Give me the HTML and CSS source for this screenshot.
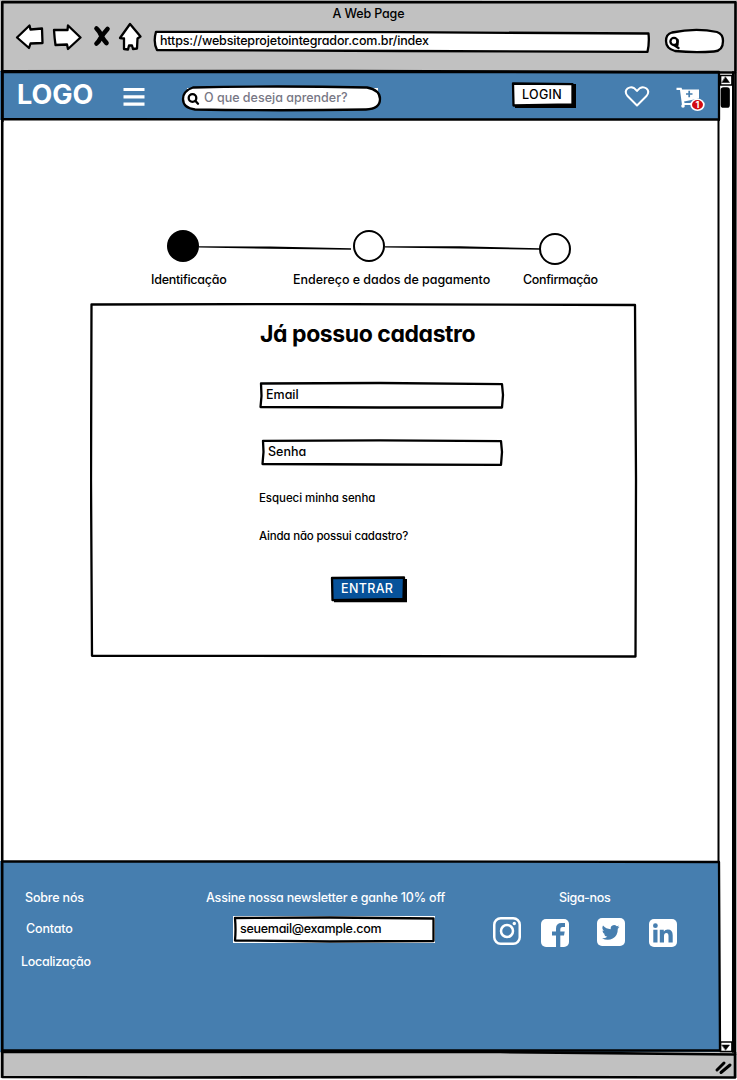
FILE: index.html
```html
<!DOCTYPE html>
<html lang="pt-BR">
<head>
<meta charset="utf-8">
<title>A Web Page</title>
<link rel="stylesheet" href="styles.css">
</head>
<body>
<div class="window">
  <header class="chrome">
    <div class="chrome-title"><span class="t-title">A Web Page</span></div>
    <div class="toolbar">
      <svg class="ic-back" viewBox="15 23 30 28" width="30" height="28"><path d="M17 37.500L29.500 25.500L30.500 29.500L42 28.500L42.500 43L30.500 43.500L29 48Z"/></svg>
      <svg class="ic-forward" viewBox="52 23 30 28" width="30" height="28"><path d="M54 30L67.500 30L68 25.500L80.500 37.500L68 49L67 44.500L55.500 45Q54.500 38 54 30Z"/></svg>
      <svg class="ic-stop" viewBox="92 23 20 28" width="20" height="28"><path d="M96.500 28.500Q99.500 31 102 37Q104.500 41 106.500 43M107.500 29Q103 34 101 37.500Q98.500 42 96.500 43.500"/></svg>
      <svg class="ic-home" viewBox="118 22 25 30" width="25" height="30"><path d="M130 24L140.500 36.500L137.500 38.500L137 48.500L133 49L132 45.500L129 45.500L128 49.500L124 49L124 38.500L120 38Z"/></svg>
      <div class="url"><svg class="sketch" viewBox="153 30 498 24" width="498" height="24"><path d="M156 31.800L400 32.200L648.500 33.500Q649.500 43 647.500 51.800L400 51L157 50Q153 42 156 31.800Z"/></svg><span class="t-url">https://websiteprojetointegrador.com.br/index</span></div>
      <svg class="ic-search" viewBox="664 27 62 28" width="62" height="28"><path d="M672 32.500Q696 27.500 717 32Q723 34 723 41Q723 51 714 51.500Q694 53 675 51Q666 48.500 666 41Q666 34 672 32.500Z"/><circle cx="674" cy="41.500" r="3.600"/><path d="M674 45L678.500 48M677.500 40V45"/></svg>
    </div>
  </header>

  <div class="viewport">
    <div class="page">
      <nav class="nav">
        <strong class="logo">LOGO</strong>
        <svg class="menu" viewBox="0 0 22 18" width="22" height="18"><path d="M.5 1.500H21.500M.5 8.800H21.500M.5 16.200H21.500"/></svg>
        <div class="search">
          <svg class="sketch" viewBox="181 85 202 27" width="202" height="27"><path class="pill-bg" d="M187 88H378V96H187Z"/><path d="M193 87.500Q275 85.500 367 87.500Q380 90 380 99Q380 109 366 109.500Q280 111 195 109.500Q183 108 183 99Q183 91 193 87.500Z"/><circle cx="192.500" cy="98" r="3.800"/><path d="M195.500 101L198 103.700"/></svg>
          <span class="t-search">O que deseja aprender?</span>
        </div>
        <button class="login"><svg class="sketch" viewBox="511 81 66 28" width="66" height="28"><path class="shadow" d="M515 84H576V108H515Z"/><path d="M513 83.500L572.500 84.200L572.500 104.500L513.500 105.500Z"/></svg><span class="t-login">LOGIN</span></button>
        <svg class="heart" viewBox="624 85 26 23" width="26" height="23"><path d="M637 105.500L627.500 96Q624 91.500 627.500 88.500Q632.500 85 637 91Q641.500 85 646.500 88.500Q650 91.500 646.500 96Z"/></svg>
        <svg class="cart" viewBox="676 86 30 26" width="30" height="26"><path class="cart-body" d="M676.500 87.800H681.500L682.200 89.500H699V98.500L684 101.500L684.600 103H694V105H682L680 89.900H676.500Z"/><circle class="cart-body" cx="683" cy="106" r="1.800"/><path class="cart-plus" d="M686 94H692.500M689.200 90.800V97.200"/><ellipse class="badge-ring" cx="697.500" cy="104.800" rx="7.200" ry="6.200"/><ellipse class="badge" cx="697.500" cy="104.800" rx="5.500" ry="4.700"/><text x="697.500" y="108.300">1</text></svg>
        <svg class="sketch" viewBox="0 70 722 52" width="722" height="52"><path class="line" d="M2 72H719M2 119L350 119.500L719 119.500M719 72L719 120M2.500 70V122"/></svg>
      </nav>

      <main class="main">
        <div class="stepper">
          <svg viewBox="165 228 410 38" width="410" height="38"><circle class="done" cx="183" cy="246" r="16"/><path class="link" d="M199 246.200L270 246.500L351 248.300L351 249.800L270 248.800L199 247.500Z"/><circle cx="369" cy="246" r="15"/><path class="link" d="M385 246.200L460 246.300L540 248.200L540 249.800L460 248.600L385 247.500Z"/><circle cx="555" cy="249" r="15"/></svg>
          <div class="labels"><span class="t-s1">Identificação</span><span class="t-s2">Endereço e dados de pagamento</span><span class="t-s3">Confirmação</span></div>
        </div>
        <section class="card">
          <svg class="sketch" viewBox="90 303 548 356" width="548" height="356"><path d="M91.500 304.500L300 304L635 305L636 480L635.500 656.500L350 656L92 655.800L91 480Z"/></svg>
          <h1 class="t-h1">Já possuo cadastro</h1>
          <div class="field email"><svg class="sketch" viewBox="258 381 247 29" width="247" height="29"><path d="M261 383.500L380 383L502 384.200L503 395L502 407.500L380 407.500L260.500 407L261.500 396Z"/></svg><span class="t-email">Email</span></div>
          <div class="field senha"><svg class="sketch" viewBox="260 438 245 29" width="245" height="29"><path d="M263 440.800L380 440.300L501 441.200L502 452L501 464.800L380 464.500L262.500 464L263.500 452Z"/></svg><span class="t-senha">Senha</span></div>
          <a class="forgot"><span class="t-forgot">Esqueci minha senha</span></a>
          <a class="signup"><span class="t-signup">Ainda não possui cadastro?</span></a>
          <button class="enter"><svg class="sketch" viewBox="330 575 78 29" width="78" height="29"><path class="shadow" d="M334 579H407V602.300H334Z"/><path d="M332 578L404 577.500L403.500 599L332.500 600.200Z"/></svg><span class="t-enter">ENTRAR</span></button>
        </section>
      </main>

      <footer class="footer">
        <svg class="sketch" viewBox="0 859 722 193" width="722" height="193"><path class="line" d="M2 861.500L350 861.500L719 862M719 862L720 1050M2 1050.500H720"/></svg>
        <ul class="links"><li><span class="t-f1">Sobre nós</span></li><li><span class="t-f2">Contato</span></li><li><span class="t-f3">Localização</span></li></ul>
        <div class="newsletter">
          <p><span class="t-news">Assine nossa newsletter e ganhe 10% off</span></p>
          <div class="news-field"><svg class="sketch" viewBox="233 916 202 27" width="202" height="27"><path class="pill-bg" d="M233 916H435V943H233Z"/><path d="M235 918L330 917.500L433.500 918.500L433.500 941L330 941.500L235 940.500Q236 930 235 918Z"/></svg><span class="t-mail">seuemail@example.com</span></div>
        </div>
        <div class="social">
          <p><span class="t-siga">Siga-nos</span></p>
          <div class="icons">
            <svg class="instagram" viewBox="0 0 28 28" width="28" height="28"><rect x="1.250" y="1.250" width="25.500" height="25.500" rx="6.500"/><circle cx="14" cy="14" r="6"/><circle class="dot" cx="21.300" cy="6.500" r="1.700"/></svg>
            <svg class="facebook" viewBox="0 0 28 28" width="28" height="28"><rect width="28" height="28" rx="5"/><path d="M15 28V16.500H11V12.500H15V9.500Q15 4 20.500 4H24V8H21.500Q19.300 8 19.300 10V12.500H23.700L23 16.500H19.300V28Z"/></svg>
            <svg class="twitter" viewBox="0 0 28 28" width="28" height="28"><rect width="28" height="28" rx="5"/><path d="M22.500 8.700Q21.500 9.200 20.500 9.300Q21.600 8.600 22 7.400Q21 8 19.800 8.200Q18.600 7 17 7Q13.300 7.300 13.700 11.300Q9 11 6 7.600Q4.300 10.800 7 13L5.500 12.500Q5.700 15.500 8.500 16.200L7 16.300Q7.800 18.500 10.300 18.700Q8 20.400 5 20.200Q10.500 23.300 15.700 20.600Q20.900 17.500 20.800 10.700Q22 9.700 22.500 8.700Z"/></svg>
            <svg class="linkedin" viewBox="0 0 28 28" width="28" height="28"><rect width="28" height="28" rx="5"/><path d="M4.300 10.700H8.500V23.500H4.300ZM10.800 10.700H14.800V12.500Q16 10.400 18.800 10.400Q23.700 10.400 23.700 16.200V23.500H19.500V17Q19.500 14 17.400 14Q15 14 15 17V23.500H10.800Z"/><circle cx="6.400" cy="6.700" r="2.400"/></svg>
          </div>
        </div>
      </footer>
    </div>
    <aside class="scrollbar"><svg viewBox="716 70 21 984" width="21" height="984"><path class="track" d="M718.500 120V861M733 72V1052"/><rect x="720.500" y="75.500" width="11.500" height="9.500"/><path class="arrow" d="M725.500 77L729.500 82.500H722Z"/><rect class="thumb" x="721.500" y="88" width="7.500" height="19" rx="2"/><rect x="720.500" y="1042" width="11.500" height="9.500"/><path class="arrow" d="M722 1045H729.500L725.700 1050Z"/></svg></aside>
  </div>
  <div class="statusbar"><svg viewBox="714 1059 19 16" width="19" height="16"><path d="M717 1070L724 1063M721 1072.500L730 1065"/></svg></div>
  <svg class="frame" viewBox="0 0 737 1080" width="737" height="1080"><path d="M2.300 2L735.500 2.300L735 500L735 1077.500L500 1077L150 1077.500L2.300 1077L2.300 1052L2 500Z"/><path d="M2 71.300L350 71L735 72.500M2 1052L500 1052L735 1054.500"/></svg>
</div>
</body>
</html>
```
FILE: styles.css
```css
* { box-sizing: border-box; }
body { margin: 0; font: 500 12.5px/16px Inter, "Liberation Sans", sans-serif; font-feature-settings: "cv11"; color: #000; background: #fff; }
p, h1, ul { margin: 0; padding: 0; }
li { list-style: none; }
button { border: 0; padding: 0; background: none; font: inherit; color: inherit; }
svg { display: block; flex: none; fill: #fff; stroke: #000; stroke-width: 2.3px; stroke-linejoin: round; stroke-linecap: round; }
span { position: relative; white-space: nowrap; }
.window { position: relative; width: 737px; height: 1080px; overflow: hidden; display: flex; flex-direction: column; }
.frame { position: absolute; inset: 0; pointer-events: none; fill: none; stroke-width: 2.6px; }
.frame path { fill: none; }
.sketch { position: absolute; left: 0; top: 0; pointer-events: none; }
.line { fill: none; }
.shadow { fill: #000; stroke: none; }
.pill-bg { stroke: none; }

.chrome { height: 71px; background: #c1c1c1; padding-top: 6px; }
.chrome-title { display: flex; justify-content: center; letter-spacing: -.15px; }
.toolbar { display: flex; align-items: flex-start; padding-left: 15px; }
.ic-back { margin-top: 1px; }
.ic-forward { margin: 1px 0 0 7px; }
.ic-stop { margin: 1px 0 0 10px; stroke-width: 4.6px; fill: none; }
.ic-home { margin-left: 6px; }
.url { position: relative; width: 498px; height: 24px; margin: 8px 0 0 10px; padding: 3px 0 0 7px; }
.t-url { letter-spacing: -.16px; }
.ic-search { margin: 5px 0 0 13px; }

.viewport { height: 981px; display: flex; }
.page { width: 720px; flex: none; display: flex; flex-direction: column; }
.nav { position: relative; height: 49px; background: #467eaf; display: flex; align-items: flex-start; padding-left: 17px; }
.nav > .sketch { top: -1px; fill: none; }
.logo { color: #fff; font: 700 27px/30px Inter, sans-serif; width: 76px; margin-top: 9px; }
.menu { margin: 17px 0 0 29.5px; stroke: #fff; stroke-width: 3.2px; stroke-linecap: butt; }
.search { position: relative; width: 202px; height: 27px; margin: 14px 0 0 36.5px; padding: 5px 0 0 23px; color: #777785; }
.login { position: relative; width: 66px; height: 28px; margin: 10px 0 0 128px; padding: 0 0 0 11px; text-align: left; }
.t-login { letter-spacing: .3px; }
.heart { margin: 14px 0 0 47px; fill: none; stroke: #fff; stroke-width: 2px; }
.cart { margin: 15px 0 0 26px; }
.cart-body { stroke: none; }
.cart-plus { stroke: #467eaf; stroke-width: 1.7px; stroke-linecap: butt; }
.badge-ring { stroke: none; }
.badge { fill: #d20a11; stroke: none; }
.cart text { font-size: 9px; font-weight: 700; text-anchor: middle; stroke: none; }

.main { height: 741px; padding-top: 108px; }
.stepper > svg { margin-left: 165px; stroke-width: 2px; }
.stepper .done { fill: #000; stroke: none; }
.stepper .link { fill: #000; stroke: none; }
.labels { display: flex; padding: 6px 0 0 151px; }
.labels span { flex: none; }
.t-s1 { width: 76px; letter-spacing: -.25px; }
.t-s2 { width: 197px; margin-left: 66px; letter-spacing: -.05px; }
.t-s3 { margin-left: 33px; letter-spacing: -.35px; }
.card { position: relative; margin: 15px 0 0 90px; width: 548px; height: 356px; padding-left: 168px; display: flex; flex-direction: column; align-items: flex-start; }
.card .t-h1 { position: relative; font: 700 23px/30px Inter, sans-serif; font-feature-settings: "cv11"; letter-spacing: -.43px; margin: 16px 0 0 2px; white-space: nowrap; }
.field { position: relative; width: 247px; height: 29px; padding: 6px 0 0 8px; }
.email { margin-top: 32px; }
.senha { margin: 28px 0 0 2px; }
.forgot, .signup { font-size: 11.5px; letter-spacing: -.06px; margin: 23px 0 0 1px; }
.signup { margin-top: 22px; letter-spacing: -.19px; }
.enter { position: relative; width: 78px; height: 29px; margin: 31px 0 0 72px; padding: 0 0 2px 11px; text-align: left; color: #fff; }
.t-enter { letter-spacing: .35px; }
.enter path:last-child { fill: #07529a; }

.footer { position: relative; height: 191px; background: #467eaf; color: #fff; display: flex; padding-top: 29px; }
.footer > .sketch { top: -2px; fill: none; }
.links { width: 205px; padding-left: 21px; letter-spacing: -.17px; }
.links li:nth-child(1) { padding-left: 4px; }
.links li:nth-child(2) { padding-left: 5px; margin-top: 15px; }
.links li:nth-child(3) { margin-top: 17px; letter-spacing: -.28px; }
.newsletter { width: 288px; }
.newsletter p { padding-left: 1px; letter-spacing: -.19px; }
.news-field { position: relative; width: 202px; height: 27px; margin: 10px 0 0 28px; padding: 5px 0 0 7px; color: #000; letter-spacing: -.28px; }
.social p { padding-left: 66px; letter-spacing: -.3px; }
.icons { display: flex; margin-top: 11px; }
.icons svg { stroke: none; fill: #fff; }
.icons .instagram { fill: none; stroke: #fff; stroke-width: 2.5px; }
.icons .dot { fill: #fff; stroke: none; }
.facebook { margin: 2px 0 0 20px; }
.twitter { margin: 1px 0 0 28px; }
.linkedin { margin: 2px 0 0 24px; }
.facebook path, .twitter path, .linkedin path, .linkedin circle { fill: #467eaf; }

.scrollbar { width: 17px; position: relative; }
.scrollbar svg { margin: -1px 0 0 -4px; stroke-width: 1.7px; }
.track { fill: none; stroke-width: 2px; }
.thumb { fill: #000; }
.arrow { fill: #000; stroke-width: .5px; }
.statusbar { height: 26px; background: #c1c1c1; padding: 7px 0 0 714px; }
.statusbar svg { stroke-width: 3px; fill: none; }
```
